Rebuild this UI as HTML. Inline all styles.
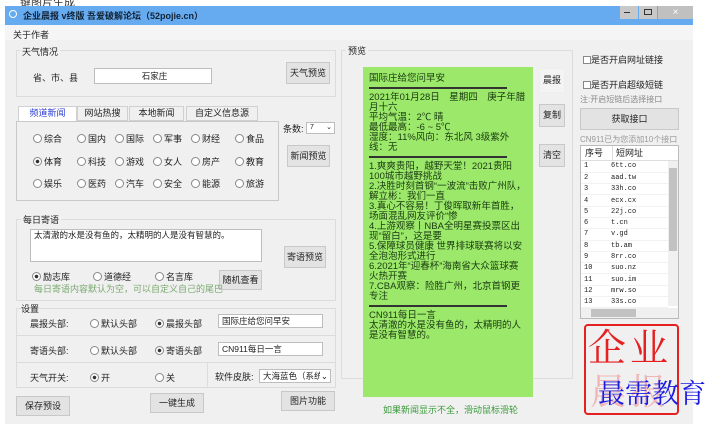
<!DOCTYPE html>
<html><head><meta charset="utf-8"><style>
*{margin:0;padding:0;box-sizing:border-box}
body{width:720px;height:424px;background:#fff;position:relative;overflow:hidden;font-family:"Liberation Sans","Noto Sans CJK SC",sans-serif;font-size:9px;color:#222}
.a{position:absolute;white-space:nowrap}
.win{position:absolute;left:5px;top:6px;width:688px;height:418px;background:#f0f0f0}
.tb{position:absolute;left:5px;top:6px;width:688px;height:19px;background:#66aaf0}
.grp{position:absolute;border:1px solid #dcdcdc}
.btn{position:absolute;background:#e3e3e3;border:1px solid #c8c8c8;text-align:center;font-size:9px}
.inp{position:absolute;background:#fff;border:1px solid #bdbdbd;font-size:8.5px;padding-left:3px;overflow:hidden;white-space:nowrap}
.r{position:absolute;white-space:nowrap;font-size:9px}
.r::before{content:"";display:inline-block;width:7px;height:7px;border:1px solid #888;border-radius:50%;background:#fff;margin-right:2px;vertical-align:-1px}
.r.on::before{background:radial-gradient(circle,#333 1.6px,#fff 2px)}
.tab{position:absolute;top:106px;height:15px;border:1px solid #d0d0d0;background:#f0f0f0;text-align:center;line-height:13px}
.green{position:absolute;left:363px;top:67px;width:170px;height:330px;background:#9be86a;font-size:9.5px;line-height:10px;padding:7px 6px;color:#1a3a10}
.hr{height:2px;background:#333;margin:3px 0 4px;width:138px}
.lst td{height:11.3px;font-size:7px;font-family:"Liberation Mono",monospace;border-bottom:1px solid #f2f2f2}
</style></head><body>
<div class="a" style="left:20px;top:-6px;font-size:11px;color:#333">键图片生成</div>
<div class="win"></div>
<div class="tb"></div>
<div class="a" style="left:9px;top:10px;width:8px;height:8px;border:1.5px solid #fff;border-radius:50%"></div>
<div class="a" style="left:23px;top:9px;font-size:9px;font-weight:bold;color:#123">企业晨报 v终版 吾爱破解论坛（52pojie.cn）</div>
<div class="a" style="left:620px;top:6px;width:18px;height:13px;background:#c8c8c8"></div>
<div class="a" style="left:639px;top:6px;width:18px;height:13px;background:#c8c8c8"></div>
<div class="a" style="left:658px;top:6px;width:35px;height:13px;background:#c0c0c0;color:#fff;text-align:center;font-size:10px;line-height:13px">×</div>
<div class="a" style="left:624px;top:12px;width:6px;height:1px;background:#333"></div>
<div class="a" style="left:644px;top:9px;width:8px;height:6px;border:1px solid #333"></div>
<div class="a" style="left:5px;top:25px;width:688px;height:15px;background:#f5f5f5"></div>
<div class="a" style="left:13px;top:28px">关于作者</div>

<div class="grp" style="left:16px;top:50px;width:320px;height:47px"></div>
<div class="a" style="left:20px;top:45px;background:#f0f0f0;padding:0 2px">天气情况</div>
<div class="a" style="left:33px;top:71px">省、市、县</div>
<div class="inp" style="left:94px;top:68px;width:118px;height:16px;text-align:center;line-height:14px">石家庄</div>
<div class="btn" style="left:286px;top:62px;width:44px;height:22px;line-height:20px">天气预览</div>

<div class="tab" style="left:18px;width:59px;background:#fff;color:#2a3bd0;border-bottom:none;height:16px">频道新闻</div>
<div class="tab" style="left:77px;width:51px">网站热搜</div>
<div class="tab" style="left:129px;width:55px">本地新闻</div>
<div class="tab" style="left:186px;width:72px">自定义信息源</div>
<div class="grp" style="left:16px;top:121px;width:263px;height:80px;border-color:#c8c8c8"></div>
<div class="r" style="left:33px;top:132px">综合</div><div class="r" style="left:77px;top:132px">国内</div><div class="r" style="left:115px;top:132px">国际</div><div class="r" style="left:153px;top:132px">军事</div><div class="r" style="left:191px;top:132px">财经</div><div class="r" style="left:235px;top:132px">食品</div>
<div class="r on" style="left:33px;top:155px">体育</div><div class="r" style="left:77px;top:155px">科技</div><div class="r" style="left:115px;top:155px">游戏</div><div class="r" style="left:153px;top:155px">女人</div><div class="r" style="left:191px;top:155px">房产</div><div class="r" style="left:235px;top:155px">教育</div>
<div class="r" style="left:33px;top:177px">娱乐</div><div class="r" style="left:77px;top:177px">医药</div><div class="r" style="left:115px;top:177px">汽车</div><div class="r" style="left:153px;top:177px">安全</div><div class="r" style="left:191px;top:177px">能源</div><div class="r" style="left:235px;top:177px">旅游</div>
<div class="a" style="left:283px;top:122px">条数:</div>
<div class="inp" style="left:306px;top:122px;width:29px;height:12px;font-size:7px;line-height:10px">7<span style="position:absolute;right:2px">⌄</span></div>
<div class="btn" style="left:287px;top:145px;width:43px;height:22px;line-height:20px">新闻预览</div>

<div class="grp" style="left:16px;top:219px;width:320px;height:82px"></div>
<div class="a" style="left:21px;top:213px;background:#f0f0f0;padding:0 2px">每日寄语</div>
<div class="inp" style="left:30px;top:229px;width:232px;height:33px;line-height:11px">太清澈的水是没有鱼的，太精明的人是没有智慧的。</div>
<div class="btn" style="left:284px;top:246px;width:42px;height:22px;line-height:20px">寄语预览</div>
<div class="r on" style="left:32px;top:270px">励志库</div><div class="r" style="left:93px;top:270px">道德经</div><div class="r" style="left:155px;top:270px">名言库</div>
<div class="btn" style="left:219px;top:270px;width:43px;height:20px;line-height:18px">随机查看</div>
<div class="a" style="left:34px;top:282px;color:#7aaa70">每日寄语内容默认为空，可以自定义自己的尾巴</div>

<div class="grp" style="left:16px;top:308px;width:320px;height:80px"></div>
<div class="a" style="left:21px;top:302px">设置</div>
<div class="a" style="left:16px;top:335px;width:320px;height:1px;background:#dcdcdc"></div>
<div class="a" style="left:16px;top:362px;width:320px;height:1px;background:#dcdcdc"></div>
<div class="a" style="left:207px;top:363px;width:1px;height:25px;background:#dcdcdc"></div>
<div class="a" style="left:30px;top:317px">晨报头部:</div>
<div class="r" style="left:90px;top:317px">默认头部</div><div class="r on" style="left:155px;top:317px">晨报头部</div>
<div class="inp" style="left:218px;top:314px;width:105px;height:14px;line-height:12px">国际庄给您问早安</div>
<div class="a" style="left:30px;top:344px">寄语头部:</div>
<div class="r" style="left:90px;top:344px">默认头部</div><div class="r on" style="left:155px;top:344px">寄语头部</div>
<div class="inp" style="left:218px;top:342px;width:105px;height:14px;line-height:12px">CN911每日一言</div>
<div class="a" style="left:30px;top:371px">天气开关:</div>
<div class="r on" style="left:90px;top:371px">开</div><div class="r" style="left:155px;top:371px">关</div>
<div class="a" style="left:215px;top:370px">软件皮肤:</div>
<div class="inp" style="left:259px;top:369px;width:72px;height:14px;line-height:12px">大海蓝色（系统<span style="position:absolute;right:2px;top:0;background:#fff;padding-left:1px">⌄</span></div>
<div class="btn" style="left:16px;top:396px;width:54px;height:20px;line-height:18px">保存预设</div>
<div class="btn" style="left:150px;top:393px;width:54px;height:20px;line-height:18px">一键生成</div>
<div class="btn" style="left:281px;top:391px;width:54px;height:20px;line-height:18px">图片功能</div>

<div class="grp" style="left:341px;top:50px;width:232px;height:329px"></div>
<div class="a" style="left:346px;top:44px;background:#f0f0f0;padding:0 2px">预览</div>
<div class="green">
<div>国际庄给您问早安</div><div class="hr"></div>
<div>2021年01月28日　星期四　庚子年腊月十六<br>平均气温：2℃ 晴<br>最低最高：-6 ~ 5℃<br>湿度：11%风向：东北风 3级紫外线：无</div><div class="hr"></div>
<div>1.爽爽贵阳，越野天堂！2021贵阳100城市越野挑战<br>2.决胜时刻首钢“一波流”击败广州队，解立彬：我们一直<br>3.真心不容易！丁俊晖取新年首胜，场面混乱网友评价“惨<br>4.上游观察丨NBA全明星赛投票区出现“留白”，这是要<br>5.保障球员健康 世界排球联赛将以安全泡泡形式进行<br>6.2021年“迎春杯”海南省大众篮球赛火热开赛<br>7.CBA观察：险胜广州，北京首钢更专注</div><div class="hr"></div>
<div>CN911每日一言<br>太清澈的水是没有鱼的，太精明的人是没有智慧的。</div>
</div>
<div class="btn" style="left:539px;top:68px;width:26px;height:25px;line-height:23px;background:#f4f4f4;border-color:#eee">晨报</div>
<div class="btn" style="left:539px;top:104px;width:26px;height:23px;line-height:21px">复制</div>
<div class="btn" style="left:539px;top:144px;width:26px;height:23px;line-height:21px">清空</div>
<div class="a" style="left:383px;top:403px;color:#3a9a3a">如果新闻显示不全，滑动鼠标滑轮</div>

<div class="a" style="left:583px;top:53px"><span style="display:inline-block;width:8px;height:8px;border:1px solid #888;background:#fff;vertical-align:-1px"></span>是否开启网址链接</div>
<div class="a" style="left:583px;top:78px"><span style="display:inline-block;width:8px;height:8px;border:1px solid #888;background:#fff;vertical-align:-1px"></span>是否开启超级短链</div>
<div class="a" style="left:580px;top:94px;color:#888;font-size:8px">注:开启短链后选择接口</div>
<div class="btn" style="left:580px;top:108px;width:99px;height:22px;line-height:20px">获取接口</div>
<div class="a" style="left:580px;top:134px;color:#999;font-size:8px">CN911已为您添加10个接口</div>
<div class="a" style="left:580px;top:145px;width:99px;height:174px;background:#fff;border:1px solid #bbb"></div>
<div class="a" style="left:581px;top:146px;width:97px;height:15px;border-bottom:1px solid #ddd;font-size:9px;line-height:14px"><span style="position:absolute;left:4px">序号</span><span style="position:absolute;left:31px;border-left:1px solid #ddd;padding-left:3px">短网址</span></div>
<div class="a" style="left:668px;top:161px;width:10px;height:145px;background:#f0f0f0"></div>
<div class="a" style="left:669px;top:168px;width:8px;height:83px;background:#c2c2c2"></div>
<div class="a" style="left:581px;top:308px;width:97px;height:10px;background:#f0f0f0"></div>
<div class="a" style="left:591px;top:309px;width:45px;height:8px;background:#c2c2c2"></div>
<table class="a lst" style="left:581px;top:161px;width:87px;border-collapse:collapse">
<tr><td style="width:30px;padding-left:3px">1</td><td>6tt.co</td></tr><tr><td style="padding-left:3px">2</td><td>aad.tw</td></tr><tr><td style="padding-left:3px">3</td><td>33h.co</td></tr><tr><td style="padding-left:3px">4</td><td>ecx.cx</td></tr><tr><td style="padding-left:3px">5</td><td>22j.co</td></tr><tr><td style="padding-left:3px">6</td><td>t.cn</td></tr><tr><td style="padding-left:3px">7</td><td>v.gd</td></tr><tr><td style="padding-left:3px">8</td><td>tb.am</td></tr><tr><td style="padding-left:3px">9</td><td>8rr.co</td></tr><tr><td style="padding-left:3px">10</td><td>suo.nz</td></tr><tr><td style="padding-left:3px">11</td><td>suo.im</td></tr><tr><td style="padding-left:3px">12</td><td>mrw.so</td></tr><tr><td style="padding-left:3px">13</td><td>33s.co</td></tr>
</table>
<div class="a" style="left:584px;top:324px;width:95px;height:91px;border:2px solid #e52020;border-radius:4px"></div>
<div class="a" style="left:588px;top:324px;font-family:'Noto Serif CJK SC',serif;font-size:38px;color:#e52020;letter-spacing:4px;line-height:42px">企业</div>
<div class="a" style="left:590px;top:370px;font-family:'Noto Serif CJK SC',serif;font-size:36px;color:#f09090;letter-spacing:4px;line-height:40px;opacity:.6">晨报</div>
<div class="a" style="left:598px;top:374px;font-family:'Noto Serif CJK SC',serif;font-size:27px;color:#1a1ae0;line-height:36px">最需教育</div>
</body></html>
